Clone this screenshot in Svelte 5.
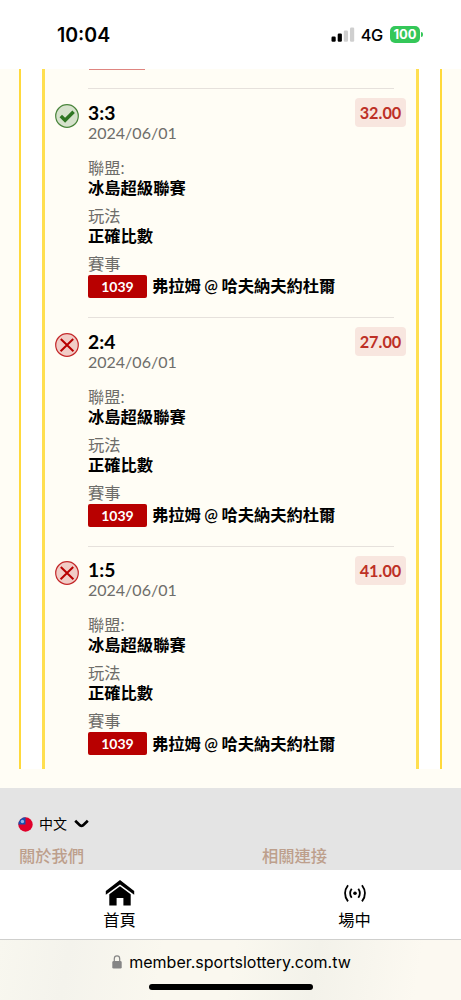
<script>
  const bets = [
    { score: '3:3', odds: '32.00', won: true },
    { score: '2:4', odds: '27.00', won: false },
    { score: '1:5', odds: '41.00', won: false }
  ];

  const date = '2024/06/01';
  const league = '冰島超級聯賽';
  const market = '正確比數';
  const eventNo = '1039';
  const match = '弗拉姆 @ 哈夫納夫約杜爾';
</script>

<div class="screen">
  <header class="status">
    <span class="status__time">10:04</span>
    <div class="status__right">
      <svg class="status__signal" width="24" height="15" viewBox="0 0 24 15">
        <rect x="0.5" y="9.5" width="4.2" height="5.2" rx="1.2" />
        <rect x="6.7" y="6.5" width="4.2" height="8.2" rx="1.2" />
        <rect x="12.8" y="3.5" width="4.2" height="11.2" rx="1.2" fill="#cfcfcf" />
        <rect x="19" y="0.5" width="4.2" height="14.2" rx="1.2" fill="#cfcfcf" />
      </svg>
      <span class="status__net">4G</span>
      <span class="status__battery">100</span>
      <i class="status__cap"></i>
    </div>
  </header>

  <main class="page">
    <div class="outer">
      <div class="inner">
        <div class="prev"></div>
        {#each bets as bet}
          <article class="bet">
            <div class="bet__icon">
              <svg width="24" height="24" viewBox="0 0 24 24" fill="none">
                {#if bet.won}
                  <circle cx="12" cy="12" r="11.3" fill="#d6e2cc" stroke="#4a853c" stroke-width="1.2" />
                  <path d="M5.8 12l4.3 4.2L18.6 7.8" stroke="#2e7522" stroke-width="3.5" />
                {:else}
                  <circle cx="12" cy="12" r="11.3" fill="#f1ccc6" stroke="#c4282a" stroke-width="1.2" />
                  <path d="M5.8 6l12.6 12.2M18.2 6L5.6 18.2" stroke="#b80000" stroke-width="2" />
                {/if}
              </svg>
            </div>
            <div class="bet__body">
              <div class="bet__score">{bet.score}</div>
              <div class="bet__date">{date}</div>
              <div class="bet__label bet__label--first">聯盟:</div>
              <div class="bet__value">{league}</div>
              <div class="bet__label">玩法</div>
              <div class="bet__value">{market}</div>
              <div class="bet__label">賽事</div>
              <div class="bet__match">
                <span class="bet__no">{eventNo}</span>
                <span class="bet__teams">{match}</span>
              </div>
            </div>
            <span class="bet__odds">{bet.odds}</span>
          </article>
        {/each}
      </div>
    </div>
  </main>

  <footer class="footer">
    <div class="lang">
      <svg width="15" height="15" viewBox="0 0 15 15">
        <circle cx="7.5" cy="7.5" r="7.2" fill="#e0002b" />
        <path d="M7.5 0.3A7.2 7.2 0 0 0 0.3 7.5H7.5z" fill="#1550b0" />
        <circle cx="4.4" cy="4.5" r="1.7" fill="#8fb4e8" />
      </svg>
      <span class="lang__name">中文</span>
      <svg class="lang__arrow" width="15" height="10" viewBox="0 0 15 10" fill="none">
        <path d="M1.2 1.8l4.9 4.6q1.4 1 2.8 0l4.9-4.6" stroke="#000" stroke-width="2.7" />
      </svg>
    </div>
    <div class="links">
      <span>關於我們</span>
      <span>相關連接</span>
    </div>
  </footer>

  <nav class="tabs">
    <div class="tab">
      <svg width="30" height="28" viewBox="0 0 30 28">
        <path d="M15 1L0.8 12v3.8L15 5.4l14.2 10.4V12z" />
        <path d="M15 7.2L4.3 15.2V26.5h7.3V19h6.8v7.5h7.3V15.2z" />
      </svg>
      <span>首頁</span>
    </div>
    <div class="tab">
      <svg width="30" height="28" viewBox="0 0 30 28" fill="none" stroke="#000" stroke-width="1.8">
        <circle cx="15" cy="14.3" r="1.8" fill="#000" stroke="none" />
        <path d="M11.7 9.8q-3.2 4.5 0 9M18.3 9.8q3.2 4.5 0 9" />
        <path d="M8 6.2q-6 8.1 0 16.2M22 6.2q6 8.1 0 16.2" />
      </svg>
      <span>場中</span>
    </div>
  </nav>

  <div class="browser">
    <div class="address">
      <svg width="10" height="14" viewBox="0 0 10 14">
        <rect x="0.3" y="6" width="9.4" height="7.6" rx="1.4" fill="#858585" />
        <path d="M2.3 6.5V3.8a2.7 2.9 0 0 1 5.4 0v2.7" fill="none" stroke="#858585" stroke-width="1.2" />
      </svg>
      <span>member.sportslottery.com.tw</span>
    </div>
    <div class="home-bar"></div>
  </div>
</div>

<style>
  :global(body) {
    background: #fff;
  }

  .screen {
    display: flex;
    flex-direction: column;
    width: 461px;
    height: 1000px;
    overflow: hidden;
    color: #000;
    font-family: Lato, "Noto Sans CJK TC", sans-serif;
    font-size: 16.3px;
  }

  .screen > * {
    flex: none;
    box-sizing: border-box;
  }

  .screen svg {
    display: block;
    flex: none;
  }

  .status {
    display: flex;
    justify-content: space-between;
    align-items: center;
    height: 69px;
    padding: 0 38px 0 57px;
    font-family: Inter, sans-serif;
  }

  .status__time {
    font-size: 19.5px;
    font-weight: 600;
  }

  .status__right {
    display: flex;
    align-items: center;
  }

  .status__signal {
    margin-right: 6px;
  }

  .status__net {
    margin-right: 7px;
    font-size: 16.3px;
    font-weight: 500;
    letter-spacing: -0.3px;
  }

  .status__battery {
    width: 30px;
    height: 17px;
    border-radius: 5px;
    background: #34c759;
    color: #fff;
    font-size: 13px;
    font-weight: 700;
    line-height: 17px;
    text-align: center;
  }

  .status__cap {
    width: 2px;
    height: 5px;
    margin-left: 1px;
    border-radius: 0 2px 2px 0;
    background: #34c759;
  }

  .page {
    height: 719px;
    padding: 0 19px;
    background: #fffdf5;
  }

  .outer {
    box-sizing: border-box;
    height: 700px;
    padding: 0 21px;
    border: solid #ffd93b;
    border-width: 0 2px;
    background: #fff;
  }

  .inner {
    box-sizing: border-box;
    height: 700px;
    overflow: hidden;
    border: solid #ffdf50;
    border-width: 0 3px;
    background: #fffdf5;
  }

  .prev {
    width: 56px;
    height: 1px;
    margin: 0 0 18.4px 44px;
    background: #df8580;
  }

  .bet {
    display: grid;
    grid-template-columns: 43px 1fr auto;
    box-sizing: border-box;
    height: 228.7px;
    padding-right: 10px;
  }

  .bet__icon {
    padding: 15.5px 0 0 10px;
  }

  .bet__body {
    grid-column: 2 / 4;
    grid-row: 1;
    margin-right: 12px;
    padding-top: 13.6px;
    border-top: 1px solid #e6e1dc;
  }

  .bet__score {
    font-size: 19.3px;
    font-weight: 700;
    line-height: 20px;
  }

  .bet__date {
    color: #6e6d6a;
    font-size: 16px;
    line-height: 20px;
  }

  .bet__label {
    margin-top: 8px;
    color: #6e6d6a;
    line-height: 20px;
  }

  .bet__label--first {
    margin-top: 15px;
  }

  .bet__value {
    font-weight: 700;
    line-height: 20px;
  }

  .bet__match {
    display: flex;
    align-items: center;
    gap: 5px;
    margin-top: 1px;
    white-space: nowrap;
  }

  .bet__no {
    width: 59px;
    height: 23px;
    border-radius: 2px;
    background: #b80000;
    color: #fff;
    font-size: 14px;
    font-weight: 700;
    line-height: 23px;
    text-align: center;
  }

  .bet__teams {
    font-weight: 600;
    line-height: 20px;
    word-spacing: -0.6px;
  }

  .bet__odds {
    grid-column: 3;
    grid-row: 1;
    width: 51px;
    height: 29px;
    margin-top: 10px;
    border-radius: 4px;
    background: #f8e6df;
    color: #bd3026;
    font-weight: 700;
    line-height: 29px;
    text-align: center;
  }

  .footer {
    height: 82px;
    padding: 26px 18px 0;
    background: #e4e4e4;
  }

  .lang {
    display: flex;
    align-items: center;
    height: 20px;
  }

  .lang__name {
    margin: 0 7px 0 6px;
    font-size: 14px;
    line-height: 20px;
  }

  .links {
    display: grid;
    grid-template-columns: 243px 1fr;
    margin: 12px 0 0 1px;
    color: #bd9f8c;
    font-weight: 500;
    line-height: 20px;
  }

  .tabs {
    display: flex;
    height: 70px;
    padding-left: 2px;
    border-bottom: 1px solid #cfcfcd;
    background: #fff;
  }

  .tab {
    display: flex;
    flex: 0 0 235px;
    flex-direction: column;
    align-items: center;
    gap: 3px;
    padding-top: 9px;
    line-height: 20px;
  }

  .browser {
    display: flex;
    flex-direction: column;
    align-items: center;
    height: 60px;
    padding-top: 12px;
    background: linear-gradient(100deg, #f8f7ef 0%, #f4f3ec 15%, #faf8ef 35%, #faf8ef 50%, #f3f2ea 68%, #fcf9f1 90%);
  }

  .address {
    display: flex;
    align-items: center;
    gap: 7px;
    height: 20px;
    padding-left: 2px;
    font-family: Inter, sans-serif;
    font-size: 16px;
  }

  .home-bar {
    width: 164px;
    height: 6px;
    margin-top: 12px;
    border-radius: 3px;
    background: #000;
  }
</style>
